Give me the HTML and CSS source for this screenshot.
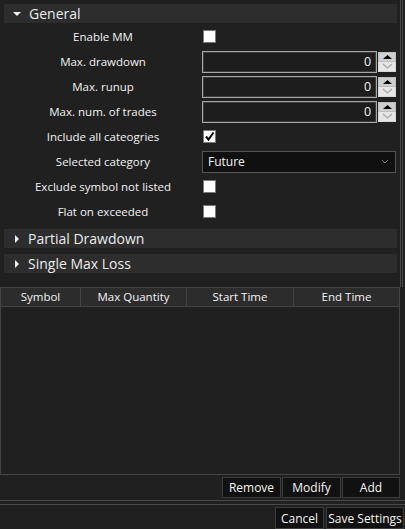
FILE: index.html
```html
<!DOCTYPE html>
<html>
<head>
<meta charset="utf-8">
<link rel="stylesheet" href="styles.css">
</head>
<body>
<div class="window">
  <div class="main">
    <div class="section-head head-general"><span class="tri-down"></span><span>General</span></div>
    <div class="rows">
      <div class="row"><div class="label">Enable MM</div><div class="ctl"><span class="check"></span></div></div>
      <div class="row"><div class="label">Max. drawdown</div><div class="ctl"><div class="num"><div class="num-box">0</div><div class="spin"><span class="up"><svg width="11" height="6" viewBox="0 0 11 6"><path d="M1 5 L5.5 1 L10 5 Z" fill="#000"/></svg></span><span class="dn"><svg width="11" height="6" viewBox="0 0 11 6"><path d="M1 1 L5.5 5 L10 1" fill="none" stroke="#a8a8a8" stroke-width="1.3"/></svg></span></div></div></div></div>
      <div class="row"><div class="label">Max. runup</div><div class="ctl"><div class="num"><div class="num-box">0</div><div class="spin"><span class="up"><svg width="11" height="6" viewBox="0 0 11 6"><path d="M1 5 L5.5 1 L10 5 Z" fill="#000"/></svg></span><span class="dn"><svg width="11" height="6" viewBox="0 0 11 6"><path d="M1 1 L5.5 5 L10 1" fill="none" stroke="#a8a8a8" stroke-width="1.3"/></svg></span></div></div></div></div>
      <div class="row"><div class="label">Max. num. of trades</div><div class="ctl"><div class="num"><div class="num-box">0</div><div class="spin"><span class="up"><svg width="11" height="6" viewBox="0 0 11 6"><path d="M1 5 L5.5 1 L10 5 Z" fill="#000"/></svg></span><span class="dn"><svg width="11" height="6" viewBox="0 0 11 6"><path d="M1 1 L5.5 5 L10 1" fill="none" stroke="#a8a8a8" stroke-width="1.3"/></svg></span></div></div></div></div>
      <div class="row"><div class="label">Include all cateogries</div><div class="ctl"><span class="check"><svg width="11" height="11" viewBox="0 0 11 11"><path d="M2 5.5 L4.5 8.5 L9.5 1.5" fill="none" stroke="#000" stroke-width="2"/></svg></span></div></div>
      <div class="row"><div class="label">Selected category</div><div class="ctl"><div class="select"><span>Future</span><svg width="8" height="5" viewBox="0 0 8 5"><path d="M1 1 L4 4 L7 1" fill="none" stroke="#777" stroke-width="1"/></svg></div></div></div>
      <div class="row"><div class="label">Exclude symbol not listed</div><div class="ctl"><span class="check"></span></div></div>
      <div class="row"><div class="label">Flat on exceeded</div><div class="ctl"><span class="check"></span></div></div>
    </div>
    <div class="section-head head-partial"><span class="tri-right"></span><span>Partial Drawdown</span></div>
    <div class="section-head head-single"><span class="tri-right"></span><span>Single Max Loss</span></div>
  </div>
  <div class="table">
    <div class="thead">
      <div class="th c1">Symbol</div>
      <div class="th c2">Max Quantity</div>
      <div class="th c3">Start Time</div>
      <div class="th c4">End Time</div>
    </div>
    <div class="tbody"></div>
  </div>
  <div class="actions">
    <button class="btn b-remove">Remove</button>
    <button class="btn b-modify">Modify</button>
    <button class="btn b-add">Add</button>
  </div>
  <div class="sep"></div>
  <div class="footer">
    <button class="btn b-cancel">Cancel</button>
    <button class="btn b-save">Save Settings</button>
  </div>
</div>
</body>
</html>
```

FILE: styles.css
```css
* { box-sizing: border-box; }
html, body { margin: 0; padding: 0; }
body {
  width: 405px;
  height: 529px;
  overflow: hidden;
  background: #202020;
  font-family: "Open Sans", "Noto Sans", sans-serif;
  font-size: 11.5px;
  color: #f2f2f2;
}
.window {
  width: 405px;
  height: 529px;
  display: flex;
  flex-direction: column;
}
.main {
  width: 403px;
  height: 287px;
  border-right: 3px double #4a4a4a;
  padding-top: 4px;
  display: flex;
  flex-direction: column;
}
.section-head {
  margin-left: 4px;
  width: 393px;
  background: #2d2d2d;
  display: flex;
  align-items: center;
  font-size: 14px;
  color: #ececec;
}
.head-general { height: 19px; }
.head-partial { height: 19px; margin-top: 5px; }
.head-single { height: 19px; margin-top: 6px; }
.tri-down {
  width: 0; height: 0;
  margin-left: 9px; margin-right: 8px;
  border-left: 4px solid transparent;
  border-right: 4px solid transparent;
  border-top: 4px solid #f0f0f0;
}
.tri-right {
  width: 0; height: 0;
  margin-left: 11px; margin-right: 9px;
  border-top: 4px solid transparent;
  border-bottom: 4px solid transparent;
  border-left: 4px solid #f0f0f0;
}
.rows {
  margin-top: 1px;
  display: flex;
  flex-direction: column;
}
.row {
  height: 25px;
  display: flex;
  align-items: center;
}
.label {
  width: 202px;
  padding-left: 4px;
  text-align: center;
  white-space: nowrap;
}
.ctl {
  flex: 1;
  display: flex;
  align-items: center;
}
.check {
  width: 13px;
  height: 13px;
  margin-left: 1px;
  background: #fff;
  border: 1px solid #7a7a7a;
  display: flex;
  align-items: center;
  justify-content: center;
}
.num {
  display: flex;
  height: 22px;
  width: 194px;
}
.num-box {
  width: 176px;
  height: 22px;
  border: 1px solid #a6a6a6;
  box-shadow: inset 0 0 0 1px #3c3c3c;
  background: #1d1d1d;
  text-align: right;
  padding-right: 5px;
  line-height: 20px;
  font-size: 12.5px;
}
.spin {
  margin-left: 1px;
  width: 18px;
  display: flex;
  flex-direction: column;
  padding-top: 1px;
  padding-bottom: 1px;
}
.spin span {
  flex: 1;
  display: flex;
  align-items: center;
  justify-content: center;
}
.spin .up { background: #cfcfcf; border: 1px solid #bdbdbd; }
.spin .dn { background: #e6e6e6; border: 1px solid #d8d8d8; border-top: none; }
.select {
  width: 194px;
  height: 22px;
  background: #101010;
  border: 1px solid #555;
  display: flex;
  align-items: center;
  justify-content: space-between;
  padding-left: 5px;
  padding-right: 6px;
  font-size: 12px;
}
.table {
  width: 400px;
  height: 188px;
  border: 1px solid #444;
  border-top: none;
  display: flex;
  flex-direction: column;
}
.thead {
  height: 20px;
  display: flex;
  background: #2c2c2c;
  border-top: 1px solid #444;
  border-bottom: 1px solid #444;
}
.th {
  text-align: center;
  line-height: 18px;
  border-right: 1px solid #444;
}
.c1 { width: 80px; }
.c2 { width: 106px; }
.c3 { width: 107px; }
.c4 { flex: 1; border-right: none; }
.tbody { flex: 1; background: #202020; }
.actions {
  width: 400px;
  height: 25px;
  display: flex;
  justify-content: flex-end;
  align-items: flex-start;
  padding-top: 2px;
  gap: 1px;
}
.btn {
  font-family: inherit;
  font-size: 12px;
  color: #f4f4f4;
  background: #111;
  border: 1px solid #3c3c3c;
  padding: 0;
  margin: 0;
  height: 21px;
}
.b-remove { width: 59px; }
.b-modify { width: 59px; }
.b-add { width: 58px; }
.sep {
  width: 405px;
  height: 5px;
  border-top: 1px solid #4a4a4a;
  border-bottom: 1px solid #4a4a4a;
  margin-top: 0;
}
.footer {
  height: 24px;
  display: flex;
  justify-content: flex-end;
  align-items: flex-end;
  gap: 2px;
  padding-right: 1px;
}
.footer .btn { height: 22px; }
.b-cancel { width: 49px; }
.b-save { width: 78px; }
```
